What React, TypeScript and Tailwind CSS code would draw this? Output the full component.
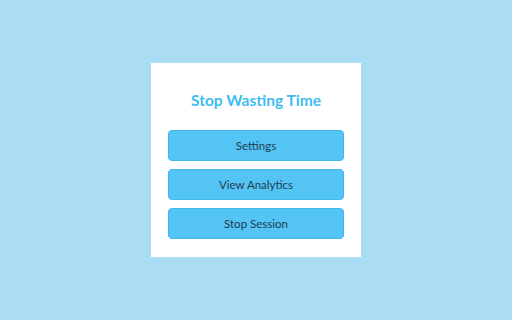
export default function App() {
  const actions = ["Settings", "View Analytics", "Stop Session"]

  return (
    <div className="flex h-[320px] w-[512px] items-center justify-center bg-[#aadcf3] font-['Lato','Open_Sans',sans-serif]">
      <div className="flex h-[194px] w-[210px] flex-col bg-white px-[17px] pt-[26px]">
        <h1 className="text-center text-[15.5px] font-bold leading-[22px] text-[#3ebdf1]">Stop Wasting Time</h1>
        <div className="mt-[19px] flex flex-col gap-[8px]">
          {actions.map((label) => (
            <button
              key={label}
              className="flex h-[31px] items-center justify-center rounded-[4px] border border-[#3db7ec] bg-[#53c4f4] pt-[1px] text-[11.5px] text-[#1f3d52]"
            >
              {label}
            </button>
          ))}
        </div>
      </div>
    </div>
  )
}
